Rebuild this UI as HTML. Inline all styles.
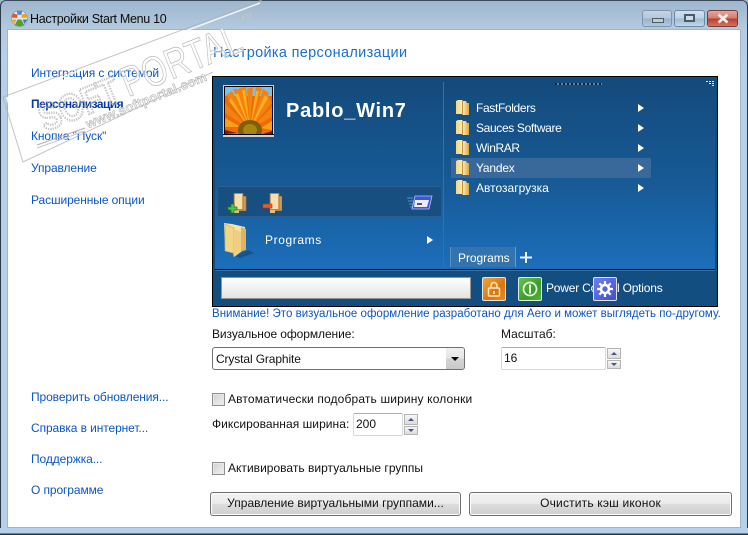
<!DOCTYPE html>
<html><head><meta charset="utf-8"><style>
html,body{margin:0;padding:0;background:#fff}
#w{position:relative;width:748px;height:535px;overflow:hidden;background:linear-gradient(#9db5cd 0,#b4cbe0 30px,#b4d0ea 60px,#b4d0ea 100%);font-family:"Liberation Sans",sans-serif;font-size:12px;color:#111}
.t{position:absolute;white-space:nowrap;line-height:14px}
.l{color:#0a55c8;letter-spacing:-.1px}
.m{color:#fff;font-size:12px;letter-spacing:-.35px}
.a{position:absolute}
.btn{position:absolute;box-sizing:border-box;height:24px;border:1px solid #707070;border-radius:3px;background:linear-gradient(#f2f2f2 0,#ebebeb 48%,#dddddd 50%,#cfcfcf 100%);box-shadow:inset 0 0 0 1px #fcfcfc;text-align:center;line-height:21px;color:#111}
.inp{position:absolute;box-sizing:border-box;background:#fff;border:1px solid #d5d8dc;border-top-color:#abadb3;border-radius:2px;line-height:21px;padding-left:2px;color:#111}
.sp{position:absolute;box-sizing:border-box;width:14px;border:1px solid #b4b4b4;background:linear-gradient(#f6f6f6,#dcdcdc)}
.sp:after{content:"";position:absolute;left:3px;border-left:3px solid transparent;border-right:3px solid transparent}
.u:after{top:3px;border-bottom:3px solid #44557f}
.d:after{top:2px;border-top:3px solid #44557f}
.cb{position:absolute;box-sizing:border-box;width:13px;height:13px;border:1px solid #8e8f8f;background:linear-gradient(135deg,#cfcfcf,#f2f2f2);box-shadow:inset 0 0 0 1px #e8e8e8}
</style></head><body><div id="w">
<svg width="0" height="0" style="position:absolute"><defs>
<linearGradient id="fg" x1="0" x2="1" y1="0" y2="0"><stop offset="0" stop-color="#f4d583"/><stop offset=".5" stop-color="#fbeebb"/><stop offset="1" stop-color="#d7a649"/></linearGradient>
<g id="f16"><path d="M0 1l2-1h4l1 1h3l1 2h2v12H7l-1-1H0z" fill="url(#fg)"/><path d="M6.500 1v14" stroke="#c2953f"/></g>
<g id="dbl"><path d="M4 0h9v3h3v15H9v2H4z" fill="#e6bc7d"/><path d="M5 1h7v15H5z" fill="#f7dfb0"/><path d="M12.500 3.500h3v14h-3z" fill="#cf9b57"/><path d="M4 .5h9v16H4zM13 3.500h3v14H9" fill="none" stroke="#a9743a" stroke-width=".7"/></g>
<path id="ar" d="M0 0l6 4-6 4z" fill="#fff"/>
</defs></svg>

<!-- outer frame -->
<div class="a" style="left:0;top:0;width:746px;height:533px;border:1px solid #2d3a47;border-radius:6px 6px 0 0;border-top-color:#3a4a58"></div>
<div class="a" style="left:0;top:528px;width:748px;height:7px;background:linear-gradient(#b4d0ea 0,#b4d0ea 5px,#1e3646 6px)"></div>
<div class="a" style="left:8px;top:30px;width:732px;height:497px;background:#fff;box-shadow:0 0 0 1px #9db6cb"></div>

<!-- title icon -->
<svg class="a" style="left:10px;top:10px" width="19" height="17" viewBox="0 0 20 18"><circle cx="10" cy="9" r="8.500" fill="#e6e6e6" stroke="#8a8a8a" stroke-width=".6"/><path d="M3 3.500l5 1.500-.5 3.500L1.500 8z" fill="#e8552b"/><path d="M17 3.500l-5 1.500.5 3.500 6-.5z" fill="#e9a41f"/><path d="M7 1h6l-1 4H8z" fill="#3f8fdc"/><path d="M5 16l3-6h4l3 6-5 1.500z" fill="#4ea32a"/><path d="M1.500 10l5 0-1.500 5z" fill="#d5b02e"/><path d="M18.500 10l-5 0 1.500 5z" fill="#3579cc"/></svg>
<div class="t" style="left:30px;top:12px;font-size:12.500px;color:#0b0b0b;letter-spacing:-.3px">Настройки Start Menu 10</div>

<!-- caption buttons -->
<div class="a" style="left:642px;top:10px;width:30px;height:17px;box-sizing:border-box;border:1px solid #7e97ad;border-radius:3px;background:linear-gradient(#c3d4e4,#b2c8dc 50%,#98b2ca 52%,#b1cade)"><div class="a" style="left:9px;top:7px;width:10px;height:3px;background:#c9ccc4;border:1px solid #4b5d6d"></div></div>
<div class="a" style="left:674px;top:10px;width:31px;height:17px;box-sizing:border-box;border:1px solid #6e8aa3;border-radius:3px;background:linear-gradient(#d0e0ee,#bed2e4 50%,#9db9d2 52%,#c0d8ea)"><div class="a" style="left:9px;top:3px;width:7px;height:4px;border:2px solid #465a70;background:#cfdbe6"></div></div>
<div class="a" style="left:707px;top:10px;width:31px;height:17px;box-sizing:border-box;border:1px solid #7b3a32;border-radius:3px;background:linear-gradient(#e3a69d,#d27a6c 50%,#bb3d2d 52%,#d27264)"><svg class="a" style="left:9px;top:2px" width="12" height="11" viewBox="0 0 12 11"><path d="M1.500 1.500l9 8M10.500 1.500l-9 8" stroke="#f3efe9" stroke-width="2.800"/></svg></div>

<!-- left nav -->
<div class="t l" style="left:31px;top:66px">Интеграция с системой</div>
<div class="t l" style="left:31px;top:97px;color:#0a3aa0;font-weight:bold;letter-spacing:-.55px">Персонализация</div>
<div class="t l" style="left:31px;top:129px">Кнопка "Пуск"</div>
<div class="t l" style="left:31px;top:161px">Управление</div>
<div class="t l" style="left:31px;top:193px">Расширенные опции</div>
<div class="t l" style="left:31px;top:390px">Проверить обновления...</div>
<div class="t l" style="left:31px;top:421px">Справка в интернет...</div>
<div class="t l" style="left:31px;top:452px">Поддержка...</div>
<div class="t l" style="left:31px;top:483px">О программе</div>

<div class="t" style="left:213px;top:45px;font-size:14.500px;color:#1a6fd0;line-height:17px;letter-spacing:.32px">Настройка персонализации</div>

<!-- menu preview -->
<div class="a" style="left:212px;top:76px;width:506px;height:231px;box-sizing:border-box;border:1px solid #000;background:#114d81;overflow:hidden">
 <div class="a" style="left:2px;top:2px;right:2px;height:191px;background:linear-gradient(#144a7b 0,#175a96 55%,#1c6fbb 100%)"></div>
 <div class="a" style="left:230px;top:5px;width:1px;height:188px;background:#2f72ad"></div>
 <div class="a" style="left:2px;top:192px;right:2px;height:1px;background:#000"></div>
 <div class="a" style="left:2px;top:193px;right:2px;height:35px;background:#134e80;border-top:1px solid #3f6f9c"></div>
 <div class="a" style="left:5px;top:109px;width:223px;height:31px;box-sizing:border-box;background:#174f80;border-top:1px solid #2c5f8f;border-bottom:1px solid #2c5f8f"></div>
 <!-- avatar -->
 <svg class="a" style="left:10px;top:8px" width="51" height="52" viewBox="0 0 51 52">
  <rect width="51" height="52" fill="#cfd3d6"/><rect x="1" y="1" width="49" height="50" fill="#000"/>
  <rect x="2" y="2" width="47" height="47" fill="#ef6a08"/>
  <rect x="2" y="2" width="47" height="9" fill="#7fc0ea"/>
  <g fill="#f4820f">
   <path d="M27 44L3 10 9 6zM27 44L10 4 17 4zM27 44L16 3 23 2zM27 44L24 4 30 2zM27 44L33 2 39 3zM27 44L40 4 46 8zM27 44L44 8 49 18zM27 44L49 22 49 32zM27 44L2 18 2 28z"/>
  </g>
  <g fill="#fbb01f">
   <path d="M27 44L12 10 15 8zM27 44L19 5 22 5zM27 44L33 6 36 6zM27 44L42 10 45 13zM27 44L6 16 8 13z"/>
  </g>
  <path d="M2 33L18 42 2 42zM49 36L38 43 49 45z" fill="#f9a01b"/>
  <path d="M2 45L14 48 2 49zM49 46L40 49H49z" fill="#7a1c00"/>
  <ellipse cx="27" cy="45" rx="12" ry="10" fill="#7e5e08"/><ellipse cx="27" cy="45" rx="7" ry="6" fill="#a8860e"/>
  <rect x="0" y="49" width="51" height="1" fill="#000"/><rect x="0" y="50" width="51" height="2" fill="#cfd3d6"/>
 </svg>
 <div class="t" style="left:73px;top:22px;font-size:20px;font-weight:bold;color:#fff;line-height:24px;letter-spacing:.75px">Pablo_Win7</div>
 <!-- toolbar icons -->
 <svg class="a" style="left:14px;top:116px" width="20" height="20" viewBox="0 0 20 20"><use href="#dbl" x="3"/><path d="M4 11h3v3h3v3H7v3H4v-3H1v-3h3z" fill="#4fc63d" stroke="#1c7a26" stroke-width=".7"/></svg>
 <svg class="a" style="left:49px;top:116px" width="20" height="20" viewBox="0 0 20 20"><use href="#dbl" x="4"/><rect x="1" y="11" width="9" height="4" fill="#ee5a1e" stroke="#b93a10" stroke-width=".6"/></svg>
 <svg class="a" style="left:194px;top:118px" width="26" height="16" viewBox="0 0 26 16"><path d="M0 3h6M1 6h5M2 9h4M3 12h3" stroke="#5f93c5"/><path d="M8 1h17l-3 13H5z" fill="#3a55e0" stroke="#b8c6f2" stroke-width=".8"/><path d="M8 5h14l-2 7H7z" fill="#eceff8"/><path d="M10 8h5v2h-5z" fill="#555"/></svg>
 <!-- big folder -->
 <svg class="a" style="left:11px;top:145px" width="30" height="36" viewBox="0 0 30 36"><path d="M12 34l12-6 6 3-14 5z" fill="#0f3f6c" opacity=".55"/><path d="M0 1l8 1 13 3v23l-3 1-8 6-1-4-8-2z" fill="#f7e2a4"/><path d="M1 2l9 4v29l-1-4-8-2z" fill="#f2d688" stroke="#c6a24c" stroke-width=".5"/><path d="M10 7l7 3v19l-7 5z" fill="#f0cf7e"/><path d="M17 5l5 2v21l-5 1z" fill="#dcb562"/></svg>
 <div class="t m" style="left:52px;top:156px;letter-spacing:.6px">Programs</div>
 <svg class="a" style="left:214px;top:159px" width="6" height="8"><use href="#ar"/></svg>

 <!-- right items -->
 <div class="a" style="left:238px;top:81px;width:200px;height:20px;background:#39689b"></div>
 <svg class="a" style="left:243px;top:23px" width="13" height="15"><use href="#f16"/></svg>
 <svg class="a" style="left:243px;top:43px" width="13" height="15"><use href="#f16"/></svg>
 <svg class="a" style="left:243px;top:63px" width="13" height="15"><use href="#f16"/></svg>
 <svg class="a" style="left:243px;top:83px" width="13" height="15"><use href="#f16"/></svg>
 <svg class="a" style="left:243px;top:103px" width="13" height="15"><use href="#f16"/></svg>
 <div class="t m" style="left:263px;top:24px">FastFolders</div>
 <div class="t m" style="left:263px;top:44px">Sauces Software</div>
 <div class="t m" style="left:263px;top:64px;letter-spacing:-.4px">WinRAR</div>
 <div class="t m" style="left:263px;top:84px;letter-spacing:-.2px">Yandex</div>
 <div class="t m" style="left:263px;top:104px;letter-spacing:0">Автозагрузка</div>
 <svg class="a" style="left:425px;top:27px" width="6" height="8"><use href="#ar"/></svg>
 <svg class="a" style="left:425px;top:47px" width="6" height="8"><use href="#ar"/></svg>
 <svg class="a" style="left:425px;top:67px" width="6" height="8"><use href="#ar"/></svg>
 <svg class="a" style="left:425px;top:87px" width="6" height="8"><use href="#ar"/></svg>
 <svg class="a" style="left:425px;top:107px" width="6" height="8"><use href="#ar"/></svg>
 <!-- grip -->
 <div class="a" style="left:342px;top:6px;width:47px;height:2px;background:repeating-linear-gradient(90deg,#0b2540 0 2px,#5f83a6 2px 4px)"></div>
 <svg class="a" style="left:493px;top:3px" width="8" height="8"><path d="M0 1h2v1H0zM3 1h2v1H3zM6 1h2v1H6zM3 3h2v1H3zM6 3h2v1H6zM6 5h2v1H6z" fill="#dfe8f0"/></svg>
 <!-- tab -->
 <div class="a" style="left:237px;top:170px;width:66px;height:20px;box-sizing:border-box;background:#3373ae;border-left:1px solid #5b8fc0;border-right:1px solid #6c9cc9"></div>
 <div class="t m" style="left:245px;top:174px;letter-spacing:-.05px">Programs</div>
 <svg class="a" style="left:307px;top:175px" width="12" height="11"><path d="M0 4.500h12v2H0zM5 0h2v11H5z" fill="#eef3f8"/></svg>

 <!-- search + buttons -->
 <div class="a" style="left:8px;top:200px;width:250px;height:22px;box-sizing:border-box;border:1px solid #8f9599;background:linear-gradient(#fff,#e3e3e3)"></div>
 <div class="a" style="left:269px;top:200px;width:24px;height:24px;box-sizing:border-box;border:1px solid #dbe6ee;border-radius:2px;background:linear-gradient(135deg,#f0a53a,#d9760d 60%,#e88b1c)"></div>
 <svg class="a" style="left:274px;top:204px" width="14" height="16" viewBox="0 0 14 16"><path d="M4 7V4.500a3 3 0 0 1 6 0V7" fill="none" stroke="#f7e0b8" stroke-width="1.600"/><rect x="1.500" y="7" width="11" height="8" rx="1" fill="none" stroke="#f9e6c6" stroke-width="1.500"/><rect x="6" y="10" width="2" height="3" fill="#f9e6c6"/></svg>
 <div class="a" style="left:305px;top:200px;width:24px;height:24px;box-sizing:border-box;border:1px solid #dcefdc;border-radius:2px;background:linear-gradient(135deg,#66c24a,#3a9d2a 60%,#4fb53a)"></div>
 <svg class="a" style="left:309px;top:204px" width="16" height="16" viewBox="0 0 16 16"><circle cx="8" cy="8" r="6.500" fill="none" stroke="#eaf6e2" stroke-width="1.700"/><rect x="7" y="3.500" width="2" height="9" fill="#eaf6e2"/></svg>
 <div class="t m" style="left:333px;top:204px;letter-spacing:-.2px">Power Control Options</div>
 <div class="a" style="left:380px;top:200px;width:24px;height:24px;box-sizing:border-box;border:1px solid #dfe3fb;border-radius:2px;background:linear-gradient(135deg,#6f7df0,#4050cf)"></div>
 <svg class="a" style="left:384px;top:204px" width="16" height="16" viewBox="0 0 16 16"><circle cx="8" cy="8" r="4" fill="none" stroke="#fff" stroke-width="2.600"/><path d="M8 0v3M8 13v3M0 8h3M13 8h3M2.300 2.300l2.100 2.100M11.600 11.600l2.100 2.100M13.700 2.300l-2.100 2.100M4.400 11.600l-2.100 2.100" stroke="#fff" stroke-width="2.200"/></svg>
</div>

<div class="t" style="left:212px;top:307px;color:#0a55c8;font-size:11.500px;letter-spacing:.02px">Внимание! Это визуальное оформление разработано для Aero и может выглядеть по-другому.</div>
<div class="t" style="left:212px;top:327px;letter-spacing:-.08px">Визуальное оформление:</div>
<div class="t" style="left:501px;top:327px;letter-spacing:.03px">Масштаб:</div>

<div class="a" style="left:212px;top:347px;width:253px;height:23px;box-sizing:border-box;border:1px solid #707070;border-radius:3px;background:#fff"></div>
<div class="a" style="left:446px;top:348px;width:18px;height:21px;background:linear-gradient(#f0f0f0,#e6e6e6 48%,#d4d4d4 52%,#c9c9c9);border-radius:0 2px 2px 0"></div>
<div class="a" style="left:451px;top:357px;border-left:4px solid transparent;border-right:4px solid transparent;border-top:4px solid #000"></div>
<div class="t" style="left:216px;top:352px;letter-spacing:-.12px">Crystal Graphite</div>

<div class="inp" style="left:501px;top:347px;width:105px;height:23px">16</div>
<div class="sp u" style="left:607px;top:348px;height:11px"></div>
<div class="sp d" style="left:607px;top:360px;height:9px"></div>

<div class="cb" style="left:212px;top:393px"></div>
<div class="t" style="left:228px;top:392px;letter-spacing:.15px">Автоматически подобрать ширину колонки</div>
<div class="t" style="left:212px;top:417px;letter-spacing:.05px">Фиксированная ширина:</div>
<div class="inp" style="left:353px;top:413px;width:50px;height:23px">200</div>
<div class="sp u" style="left:404px;top:414px;height:11px"></div>
<div class="sp d" style="left:404px;top:426px;height:9px"></div>
<div class="cb" style="left:212px;top:462px"></div>
<div class="t" style="left:228px;top:461px;letter-spacing:.02px">Активировать виртуальные группы</div>

<div class="btn" style="left:210px;top:492px;width:251px;letter-spacing:.02px">Управление виртуальными группами...</div>
<div class="btn" style="left:469px;top:492px;width:263px;letter-spacing:.18px">Очистить кэш иконок</div>

<!-- watermark -->
<svg class="a" style="left:0;top:0;pointer-events:none" width="270" height="175" viewBox="0 0 270 175">
 <path d="M262 0L3 97 23 162 213 72" fill="none" stroke="#aeb2b6" stroke-width="1" opacity=".75"/>
 <path d="M260 3L7 98 25 158 212 68" fill="none" stroke="#fff" stroke-width="1.500" opacity=".85"/>
 <path d="M37 145L85 128" stroke="#b0b0b0" stroke-width="1" fill="none"/>
 <path d="M37 148L85 131" stroke="#c8c8c8" stroke-width="1" fill="none"/>
 <g transform="translate(3 97) rotate(-22)" font-family="Liberation Sans,sans-serif">
  <text x="26" y="48" font-size="38" font-weight="bold" fill="none" stroke="#b2b2b2" stroke-width="2.400" stroke-dasharray="1.600 1.200" opacity=".7" textLength="84" lengthAdjust="spacingAndGlyphs">SOFT</text>
  <text x="116" y="47" font-size="42" fill="#fff" fill-opacity=".55" stroke="#bdbdbd" stroke-width=".8" textLength="126" lengthAdjust="spacingAndGlyphs">PORTAL</text>
  <text x="67" y="61" font-size="13" font-weight="bold" fill="#f1f1f1" fill-opacity=".7" stroke="#a8a8a8" stroke-width=".5" textLength="129" lengthAdjust="spacing">www.softportal.com</text>
  <text x="250" y="20" font-size="8" fill="#eee" stroke="#aaa" stroke-width=".3">TM</text>
 </g>
</svg>
</div></body></html>
